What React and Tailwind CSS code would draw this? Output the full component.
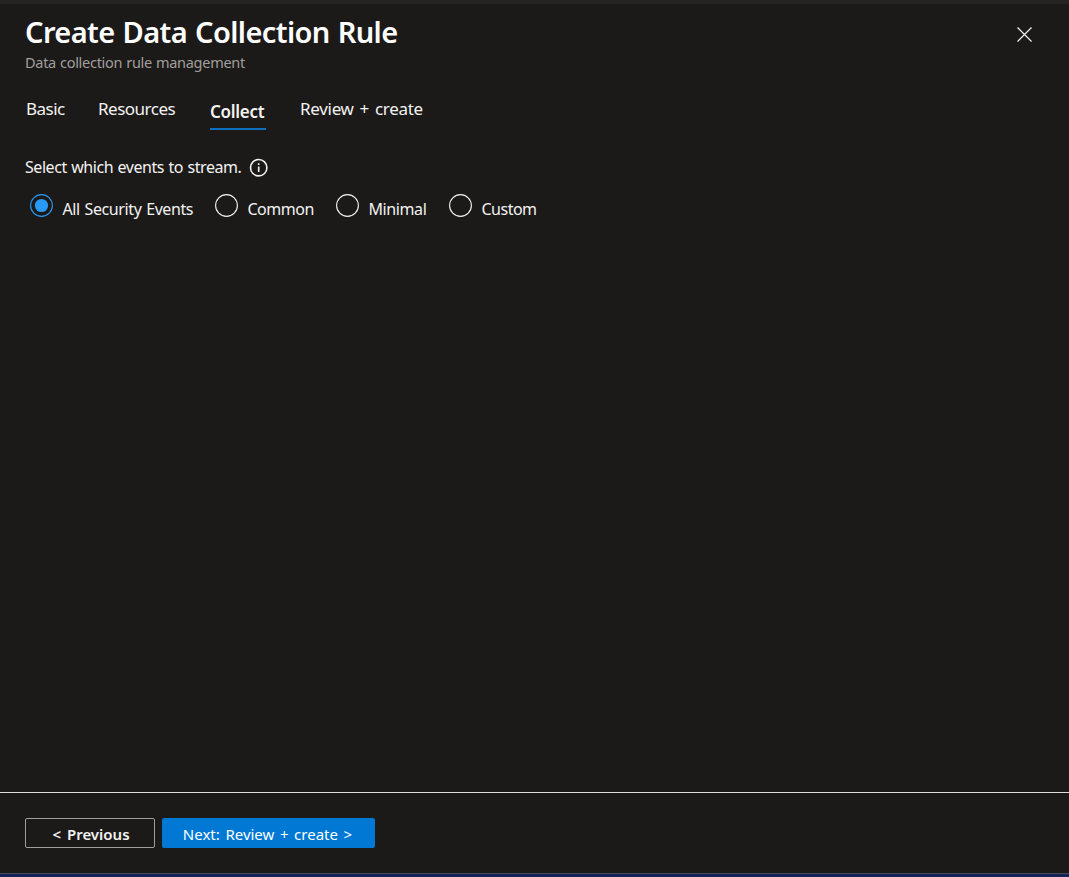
import { useState } from 'react';

const TABS = [
  { label: 'Basic', style: 'ml-[26px] w-[39px] tracking-[-0.5px]' },
  { label: 'Resources', style: 'ml-[33px] w-[78px] tracking-[-0.5px]' },
  { label: 'Collect', style: 'ml-[34px] w-[56px] tracking-[-0.3px]' },
  { label: 'Review + create', style: 'ml-[34px] w-[124px] tracking-[-0.3px] [word-spacing:1.8px]' },
];

const OPTIONS = [
  { label: 'All Security Events', style: 'w-[185px]', text: 'tracking-[-0.4px] [word-spacing:1px]' },
  { label: 'Common', style: 'w-[121px]', text: 'tracking-[-0.5px]' },
  { label: 'Minimal', style: 'w-[113px]', text: 'tracking-[-0.4px]' },
  { label: 'Custom', style: 'w-[100px]', text: 'tracking-[-0.5px]' },
];

function Radio({ checked }) {
  return (
    <svg width="23" height="23" viewBox="0 0 23 23" fill="none" className="shrink-0">
      <circle cx="11.5" cy="11.5" r="10.9" stroke={checked ? '#2899f5' : '#f3f2f1'} strokeWidth="1.1" />
      {checked && <circle cx="11.5" cy="11.5" r="6.6" fill="#2899f5" />}
    </svg>
  );
}

export default function App() {
  const [tab, setTab] = useState('Collect');
  const [option, setOption] = useState('All Security Events');

  return (
    <div className="flex h-[877px] w-[1069px] flex-col overflow-hidden whitespace-nowrap border-t-4 border-[#252423] bg-[#1b1a19] font-['Noto_Sans',sans-serif] text-[#f3f2f1]">
      <header className="flex h-[88px] shrink-0 justify-between pl-[25px] pr-[36px] pt-[9px]">
        <div>
          <h1 className="h-[38px] text-[29px] font-semibold leading-[38px] tracking-[-0.6px] text-white [word-spacing:1px]">Create Data Collection Rule</h1>
          <p className="mt-px h-[20px] text-[14.5px] leading-[20px] tracking-[-0.28px] text-[#a19f9d] [word-spacing:0.5px]">Data collection rule management</p>
        </div>
        <button aria-label="Close" className="mt-[13px] h-[17px] w-[17px]">
          <svg width="17" height="17" viewBox="0 0 17 17" stroke="#f3f2f1" strokeWidth="1.2">
            <path d="M1.5 1.5l14 14M15.5 1.5l-14 14" />
          </svg>
        </button>
      </header>

      <nav className="flex h-[38px] shrink-0 items-start text-[17px] leading-[34px]">
        {TABS.map((t) => (
          <button
            key={t.label}
            onClick={() => setTab(t.label)}
            className={`${t.style} text-left ${tab === t.label ? 'h-[38px] border-b-2 border-[#106ebe] pt-[3px] font-semibold' : 'h-[34px]'}`}
          >
            {t.label}
          </button>
        ))}
      </nav>

      <main className="flex-1 pt-[26px]">
        <div className="flex h-[22px] items-center pl-[25px]">
          <span className="w-[224px] text-[16px] leading-[22px] tracking-[-0.45px] [word-spacing:0.75px]">Select which events to stream.</span>
          <svg width="20" height="20" viewBox="0 0 20 20" fill="none" className="mt-[2px]">
            <circle cx="9.7" cy="9.7" r="8.2" stroke="#f3f2f1" strokeWidth="1.6" />
            <path d="M9.7 8.4v5.5M9.7 5.3v1.7" stroke="#f3f2f1" strokeWidth="1.6" />
          </svg>
        </div>
        <div className="flex pl-[30px] pt-[16px]">
          {OPTIONS.map((o) => (
            <button key={o.label} onClick={() => setOption(o.label)} className={`flex h-[30px] text-left ${o.style}`}>
              <Radio checked={option === o.label} />
              <span className={`ml-[9.5px] mt-[4px] text-[16px] leading-[22px] ${o.text}`}>{o.label}</span>
            </button>
          ))}
        </div>
      </main>

      <footer className="flex h-[81px] shrink-0 gap-[7px] border-t border-[#e1dfdd] pl-[25px] pt-[25px] text-[15px] leading-[30px]">
        <button className="h-[30px] w-[130px] rounded-[2px] border border-[#a19f9d] pt-px pl-[2px] font-semibold leading-[28px] [word-spacing:2px]">&lt; Previous</button>
        <button className="h-[30px] w-[213px] rounded-[2px] bg-[#0078d4] pr-[2px] pt-px text-white [word-spacing:1.7px]">Next: Review + create &gt;</button>
      </footer>
      <div className="h-[4px] shrink-0 border-t border-[#414b62] bg-[#152457]" />
    </div>
  );
}
